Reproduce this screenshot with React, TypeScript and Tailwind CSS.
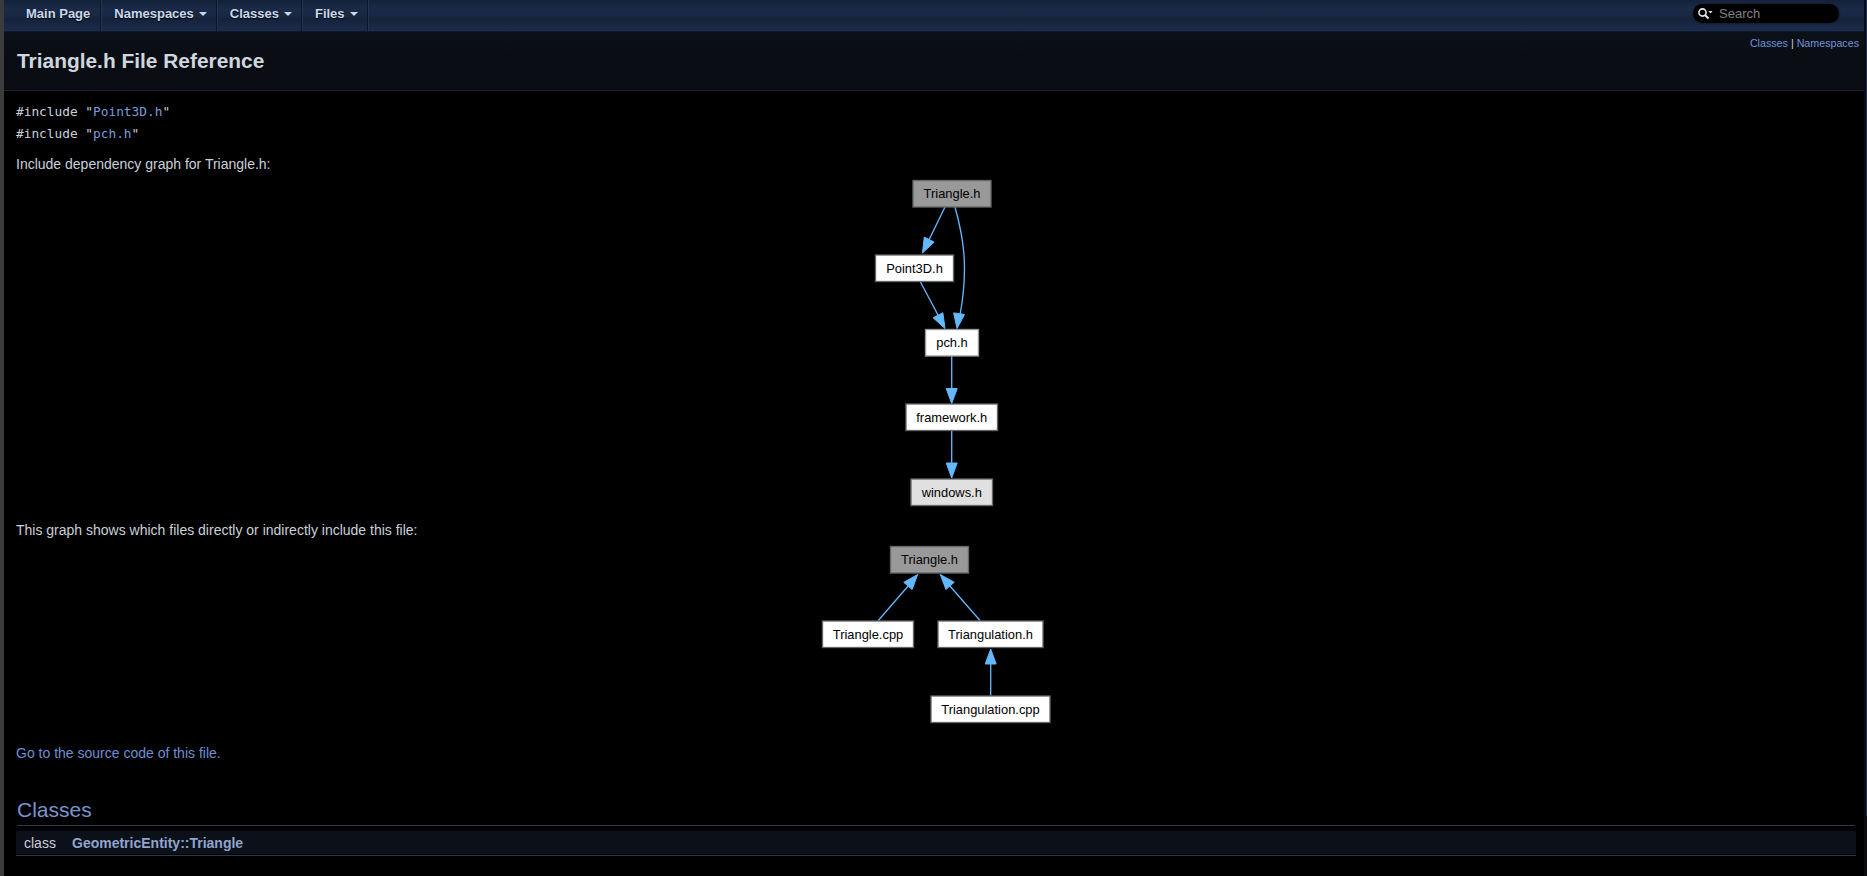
import React from 'react'

const font = "font-['Liberation_Sans',Arial,sans-serif]"

function Box({ x, y, w, h, label, fill = '#ffffff', stroke = '#666666' }: { x: number, y: number, w: number, h: number, label: string, fill?: string, stroke?: string }) {
    return (
        <g>
            <rect x={x} y={y} width={w} height={h} fill={fill} stroke={stroke} strokeWidth="1.33" />
            <text x={x + w / 2} y={y + h / 2 + 4.5} textAnchor="middle" fontFamily="Liberation Sans, Arial, sans-serif" fontSize="12.9" fill="#000000">{label}</text>
        </g>
    )
}

// d ends at the base of the head, tip is where the head points
function Arrow({ d, tip, from }: { d: string, tip: [number, number], from: [number, number] }) {
    const dx = tip[0] - from[0]
    const dy = tip[1] - from[1]
    const len = Math.hypot(dx, dy)
    const ux = dx / len
    const uy = dy / len
    const bx = tip[0] - ux * 15
    const by = tip[1] - uy * 15
    const pts = `${tip[0]},${tip[1]} ${bx - uy * 5.5},${by + ux * 5.5} ${bx + uy * 5.5},${by - ux * 5.5}`
    return (
        <g>
            <path d={d} fill="none" stroke="#63b8ff" strokeWidth="1.33" />
            <polygon points={pts} fill="#63b8ff" stroke="#63b8ff" strokeWidth="1" />
        </g>
    )
}

function IncludeGraph() {
    return (
        <svg width="240" height="334" viewBox="816 176 240 334" className="block">
            <Arrow d="M945 207L927 244" from={[932, 234]} tip={[922.5, 253]} />
            <Arrow d="M955 207C963 236 969 266 960 315" from={[961, 300]} tip={[957, 328.5]} />
            <Arrow d="M920.5 282L938 315" from={[932, 304]} tip={[945, 328.5]} />
            <Arrow d="M951.7 356V390" from={[951.7, 356]} tip={[951.7, 403.5]} />
            <Arrow d="M951.7 431V465" from={[951.7, 431]} tip={[951.7, 478]} />
            <Box x={913} y={180.5} w={78} h={26.5} label="Triangle.h" fill="#999999" />
            <Box x={875.5} y={255} w={78} h={26.5} label="Point3D.h" />
            <Box x={925.5} y={329.5} w={53} h={26.5} label="pch.h" stroke="#999999" />
            <Box x={906} y={404} w={91.5} h={26.5} label="framework.h" />
            <Box x={911} y={479} w={81.5} h={26.5} label="windows.h" fill="#e0e0e0" />
        </svg>
    )
}

function IncludedByGraph() {
    return (
        <svg width="240" height="185" viewBox="816 542 240 185" className="block">
            <Arrow d="M878.3 620.5L909 585" from={[878.3, 620.5]} tip={[917.7, 574.5]} />
            <Arrow d="M980 620.5L949 585" from={[980, 620.5]} tip={[940.3, 574.5]} />
            <Arrow d="M990.7 695.5V662" from={[990.7, 695.5]} tip={[990.7, 649]} />
            <Box x={890.5} y={546.5} w={78} h={26.5} label="Triangle.h" fill="#999999" />
            <Box x={822.5} y={621} w={91} h={26.5} label="Triangle.cpp" />
            <Box x={938} y={621} w={105} h={26.5} label="Triangulation.h" />
            <Box x={931} y={696} w={119} h={26.5} label="Triangulation.cpp" />
        </svg>
    )
}

function NavItem({ label, caret, first }: { label: string, caret?: boolean, first?: boolean }) {
    return (
        <div className={`h-full flex items-center pb-[4px] border-r border-[#0d1626] shadow-[1px_0_0_#24344f] ${first ? 'pl-[22px] pr-[10px]' : 'pl-[13px] pr-[9px]'}`}>
            <span className="text-[13px] font-bold text-[#c9d8ee] [text-shadow:0_1px_1px_#000]">{label}</span>
            {caret && <span className="ml-[5px] mt-[1px] w-0 h-0 border-x-[4px] border-x-transparent border-t-[4px] border-t-[#c9d8ee]" />}
        </div>
    )
}

export default function App() {
    return (
        <div className={`w-[1867px] h-[876px] flex overflow-hidden bg-black text-[#c9d1d9] ${font}`}>
            <div className="w-1 bg-[#3c3c3c]" />

            <div className="flex-1 min-w-0">
                {/* Navbar */}
                <div className="h-[31px] flex items-center justify-between bg-[linear-gradient(#14213a,#1a2a47_30%,#182740_55%,#15223a_60%,#1b2c4c)]">
                    <div className="h-full flex">
                        <NavItem label="Main Page" first />
                        <NavItem label="Namespaces" caret />
                        <NavItem label="Classes" caret />
                        <NavItem label="Files" caret />
                    </div>
                    <div className="w-[146px] h-[19px] mr-[25px] mb-[4px] rounded-full bg-black shadow-[0_0_2px_#0b1220] flex items-center pl-[4px]">
                        <svg width="16" height="14" viewBox="0 0 16 14" className="shrink-0">
                            <circle cx="5.5" cy="5.5" r="3.6" fill="none" stroke="#e8e8e8" strokeWidth="1.6" />
                            <path d="M8.2 8.2L11.5 11.5" stroke="#e8e8e8" strokeWidth="2" />
                            <path d="M11.5 4H15.5L13.5 6.5Z" fill="#e8e8e8" />
                        </svg>
                        <span className="ml-[6px] text-[13px] text-[#808080]">Search</span>
                    </div>
                </div>

                {/* Title area */}
                <div className="h-[60px] flex justify-between bg-[linear-gradient(#0c1019,#0a0d14_40%,#090c13)] border-t border-[#10192b] border-b border-b-[#1b2033] pl-[13px] pr-[5px]">
                    <h1 className="mt-[17px] text-[20.9px] leading-[24px] font-bold text-[#cfd6de]">Triangle.h File Reference</h1>
                    <div className="mt-[4px] text-[10.7px] leading-[14px] text-[#c9d1d9]">
                        <span className="text-[#6d95d8]">Classes</span> | <span className="text-[#6d95d8]">Namespaces</span>
                    </div>
                </div>

                {/* Contents */}
                <div className="pl-3 pr-2 pt-[10px]">
                    <div className="font-['DejaVu_Sans_Mono',monospace] text-[12.8px] leading-[22px]">
                        <div>#include "<span className="text-[#7b9cdc]">Point3D.h</span>"</div>
                        <div>#include "<span className="text-[#7b9cdc]">pch.h</span>"</div>
                    </div>
                    <p className="mt-[11px] text-[14px] leading-[16px]">Include dependency graph for Triangle.h:</p>
                    <div className="flex justify-center mt-[4px]">
                        <IncludeGraph />
                    </div>
                    <p className="mt-[12px] text-[14px] leading-[16px]">This graph shows which files directly or indirectly include this file:</p>
                    <div className="flex justify-center mt-[4px]">
                        <IncludedByGraph />
                    </div>
                    <p className="mt-[18px] text-[14px] leading-[16px] text-[#6d8fd0]">Go to the source code of this file.</p>

                    <div className="mt-[37px] w-[1840px]">
                        <h2 className="ml-px mr-px h-[28px] text-[21px] leading-[24px] text-[#7795cf] border-b border-[#2f3552]">Classes</h2>
                        <div className="mt-[5px] h-[23px] pt-[2px] flex items-center bg-[#0c1019] text-[14px]">
                            <span className="pl-[8px] w-[57px]">class</span>
                            <span className="ml-[-1px] font-bold text-[#90a5ce]">GeometricEntity::Triangle</span>
                        </div>
                        <div className="mt-px h-px bg-[#2f3552]" />
                    </div>
                </div>
            </div>

            <div className="w-[3px] flex bg-[#0b0c10]">
                <div className="w-[2px]" />
                <div className="w-px h-[816px] bg-[#1e2f55]" />
            </div>
        </div>
    )
}
